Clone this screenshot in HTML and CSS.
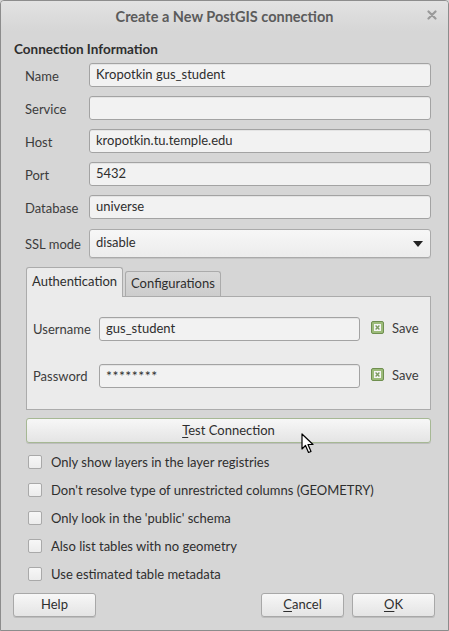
FILE: index.html
```html
<!DOCTYPE html>
<html>
<head>
<meta charset="utf-8">
<link rel="stylesheet" href="styles.css">
</head>
<body>
<div class="window">
  <div class="titlebar">
    <span class="title">Create a New PostGIS connection</span>
    <span class="close">
      <svg width="10" height="10" viewBox="0 0 10 10"><path d="M1.5 1.5 L8.5 8.5 M8.5 1.5 L1.5 8.5" stroke="#9a9a9a" stroke-width="2.2" stroke-linecap="round"/></svg>
    </span>
  </div>
  <div class="content">
    <div class="group-title">Connection Information</div>
    <div class="form">
      <label class="lbl">Name</label><div class="input">Kropotkin gus_student</div>
      <label class="lbl">Service</label><div class="input"></div>
      <label class="lbl">Host</label><div class="input">kropotkin.tu.temple.edu</div>
      <label class="lbl">Port</label><div class="input">5432</div>
      <label class="lbl">Database</label><div class="input">universe</div>
      <label class="lbl lbl-ssl">SSL mode</label>
      <div class="combo"><span>disable</span>
        <svg class="arrow" width="10" height="6" viewBox="0 0 10 6"><path d="M0 0 H10 L5 6 Z" fill="#222"/></svg>
      </div>
    </div>

    <div class="tabs">
      <div class="tab active">Authentication</div>
      <div class="tab">Configurations</div>
    </div>
    <div class="panel">
      <div class="auth-row">
        <span class="auth-lbl">Username</span>
        <div class="input auth-input">gus_student</div>
        <span class="save">
          <svg width="13" height="13" viewBox="0 0 13 13"><rect x="0.5" y="0.5" width="12" height="12" rx="1.5" fill="#9cbb7a" stroke="#6f8f4f"/><rect x="3" y="3" width="7" height="7" fill="#f4f4f4"/><path d="M4.6 4.6 L8.4 8.4 M8.4 4.6 L4.6 8.4" stroke="#7c9a60" stroke-width="1.4"/></svg>
          <span>Save</span>
        </span>
      </div>
      <div class="auth-row">
        <span class="auth-lbl">Password</span>
        <div class="input auth-input pw">********</div>
        <span class="save">
          <svg width="13" height="13" viewBox="0 0 13 13"><rect x="0.5" y="0.5" width="12" height="12" rx="1.5" fill="#9cbb7a" stroke="#6f8f4f"/><rect x="3" y="3" width="7" height="7" fill="#f4f4f4"/><path d="M4.6 4.6 L8.4 8.4 M8.4 4.6 L4.6 8.4" stroke="#7c9a60" stroke-width="1.4"/></svg>
          <span>Save</span>
        </span>
      </div>
    </div>

    <div class="btn test-btn"><span><u>T</u>est Connection</span>
      <svg class="cursor" width="14" height="21" viewBox="0 0 14 21"><path d="M1 1 L1 16 L4.5 12.5 L7.5 19.5 L10 18.5 L7 11.5 L12 11.5 Z" fill="#fff" stroke="#000" stroke-width="1.2" stroke-linejoin="round"/></svg>
    </div>

    <div class="checks">
      <div class="check"><span class="box"></span>Only show layers in the layer registries</div>
      <div class="check"><span class="box"></span>Don't resolve type of unrestricted columns (GEOMETRY)</div>
      <div class="check"><span class="box"></span>Only look in the 'public' schema</div>
      <div class="check"><span class="box"></span>Also list tables with no geometry</div>
      <div class="check"><span class="box"></span>Use estimated table metadata</div>
    </div>

    <div class="buttons">
      <div class="btn small">Help</div>
      <div class="spacer"></div>
      <div class="btn small"><span><u>C</u>ancel</span></div>
      <div class="btn small"><span><u>O</u>K</span></div>
    </div>
  </div>
</div>
</body>
</html>
```

FILE: styles.css
```css
* { box-sizing: border-box; }
html, body { margin: 0; padding: 0; background: #d6d6d6; }
body {
  font-family: "Lato", "Noto Sans", sans-serif;
  font-size: 13px;
  color: #3c3c3c;
}
.window {
  width: 449px;
  height: 631px;
  border: 1px solid #8c8c8c;
  border-radius: 4px 4px 0 0;
  background: #d6d6d6;
  position: relative;
  overflow: hidden;
}
.titlebar {
  height: 30px;
  display: flex;
  align-items: center;
  justify-content: center;
  background: linear-gradient(#e2e2e2, #d6d6d6);
  position: relative;
}
.title {
  font-weight: bold;
  font-size: 14.5px;
  color: #5b5b5b;
  padding-top: 1px;
}
.close {
  position: absolute;
  right: 11px;
  top: 9px;
  display: flex;
}
.content {
  padding: 0 17px 0 12px;
}
.group-title {
  font-weight: bold;
  font-size: 13.5px;
  color: #2e2e2e;
  margin-top: 10px;
  height: 20px;
  padding-left: 1px;
}
.form {
  display: grid;
  grid-template-columns: 64px 1fr;
  row-gap: 9px;
  padding-left: 12px;
  margin-top: 2px;
  align-items: center;
}
.lbl {
  color: #3c3c3c;
  padding-top: 2px;
}
.input {
  height: 24px;
  border: 1px solid #a3a3a3;
  border-radius: 3px;
  background: #f2f2f2;
  padding: 0 6px;
  display: flex;
  align-items: center;
  color: #2e2e2e;
  box-shadow: inset 0 1px 0 #e4e4e4;
  padding-bottom: 2px;
}
.combo {
  height: 29px;
  margin-top: 1px;
  border: 1px solid #aaaaaa;
  border-radius: 3px;
  background: linear-gradient(#f7f7f7, #ececec);
  box-shadow: 0 1px 0 #c4c4c4;
  display: flex;
  align-items: center;
  justify-content: space-between;
  padding: 0 7px 3px 6px;
  color: #2e2e2e;
}
.combo .arrow { margin-top: 3px; }
.tabs {
  display: flex;
  align-items: flex-end;
  margin-top: 9px;
  margin-left: 13px;
  height: 29px;
  gap: 2px;
}
.tab {
  border: 1px solid #ababab;
  border-bottom: none;
  border-radius: 3px 3px 0 0;
  padding: 0 5px;
  height: 25px;
  display: flex;
  align-items: center;
  background: linear-gradient(#d9d9d9, #cdcdcd);
  color: #2e2e2e;
  padding-bottom: 2px;
}
.tab.active {
  height: 30px;
  margin-bottom: -1px;
  background: #ebebeb;
  position: relative;
  z-index: 1;
  padding-bottom: 4px;
}
.panel {
  margin-left: 13px;
  height: 114px;
  border: 1px solid #ababab;
  background: #ebebeb;
  padding: 20px 0 0 6px;
  display: flex;
  flex-direction: column;
  gap: 23px;
}
.auth-row {
  display: flex;
  align-items: center;
  height: 24px;
}
.auth-lbl { width: 66px; }
.auth-input { width: 261px; }
.pw { letter-spacing: 0.5px; font-size: 14px; }
.save {
  display: flex;
  align-items: center;
  gap: 8px;
  margin-left: 11px;
  margin-top: -3px;
}
.btn {
  height: 25px;
  border: 1px solid #a8a8a8;
  border-radius: 3px;
  background: linear-gradient(#f7f7f7, #e4e4e4);
  box-shadow: 0 1px 0 #bdbdbd;
  display: flex;
  align-items: center;
  justify-content: center;
  color: #2e2e2e;
  padding-bottom: 2px;
}
.btn u { text-decoration-thickness: 1px; text-underline-offset: 2px; }
.test-btn {
  margin: 8px 0 0 13px;
  border-color: #a6b894;
  position: relative;
}
.cursor {
  position: absolute;
  left: 274px;
  top: 14px;
}
.checks {
  margin-top: 11px;
  margin-left: 15px;
  display: flex;
  flex-direction: column;
  gap: 12px;
}
.check {
  display: flex;
  align-items: center;
  height: 16px;
  gap: 9px;
  color: #2e2e2e;
}
.box {
  width: 14px;
  height: 14px;
  border: 1px solid #a9a9a9;
  border-radius: 2px;
  background: linear-gradient(#f7f7f7, #ececec);
  flex: none;
}
.buttons {
  display: flex;
  margin-top: 11px;
  margin-right: -4px;
  gap: 8px;
}
.btn.small { width: 83px; height: 24px; }
.spacer { flex: 1; }
```
